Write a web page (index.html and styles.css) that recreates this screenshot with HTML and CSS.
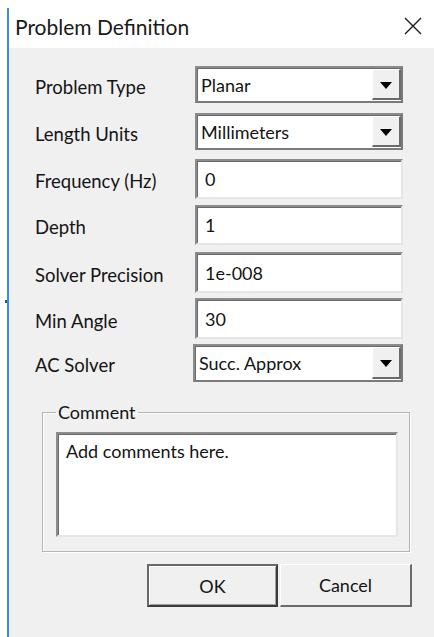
FILE: index.html
```html
<!DOCTYPE html>
<html>
<head>
<meta charset="utf-8">
<title>Problem Definition</title>
<link rel="stylesheet" href="styles.css">
</head>
<body>
<div class="window">
  <div class="titlebar">
    <span class="title">Problem Definition</span>
    <svg class="close" width="18" height="18" viewBox="0 0 18 18">
      <path d="M1 1 L17 17 M17 1 L1 17" stroke="#1e1e1e" stroke-width="1.4" fill="none"/>
    </svg>
  </div>
  <div class="client">
    <span class="edge-mark"></span>
    <div class="form">
      <div class="row h37">
        <label class="lbl">Problem Type</label>
        <div class="combo"><span class="val">Planar</span><span class="drop"><i class="arrow"></i></span></div>
      </div>
      <div class="row h37 gap10">
        <label class="lbl">Length Units</label>
        <div class="combo"><span class="val">Millimeters</span><span class="drop"><i class="arrow"></i></span></div>
      </div>
      <div class="row h40 gap9">
        <label class="lbl">Frequency (Hz)</label>
        <div class="edit"><span class="val">0</span></div>
      </div>
      <div class="row h40 gap6">
        <label class="lbl">Depth</label>
        <div class="edit"><span class="val">1</span></div>
      </div>
      <div class="row h41 gap7">
        <label class="lbl">Solver Precision</label>
        <div class="edit"><span class="val">1e-008</span></div>
      </div>
      <div class="row h41 gap5">
        <label class="lbl">Min Angle</label>
        <div class="edit"><span class="val">30</span></div>
      </div>
      <div class="row h38 gap5">
        <label class="lbl">AC Solver</label>
        <div class="combo wide"><span class="val">Succ. Approx</span><span class="drop"><i class="arrow"></i></span></div>
      </div>
    </div>

    <fieldset class="group">
      <legend class="group-title">Comment</legend>
      <div class="memo">Add comments here.</div>
    </fieldset>

    <div class="buttons">
      <button class="btn default">OK</button>
      <button class="btn">Cancel</button>
    </div>
  </div>
</div>
</body>
</html>
```

FILE: styles.css
```css
html, body {
  margin: 0;
  padding: 0;
  background: #ffffff;
}

body {
  font-family: Lato, "Noto Sans", sans-serif;
  color: #141414;
  width: 434px;
  height: 637px;
  overflow: hidden;
}

.window {
  margin: 8px 0 0 7px;
  border-left: 2px solid #3a8edb;
  height: 629px;
  display: flex;
  flex-direction: column;
}

.titlebar {
  height: 40px;
  background: #ffffff;
  display: flex;
  align-items: center;
  justify-content: space-between;
  padding: 0 12px 0 6px;
}

.title {
  font-size: 21px;
  color: #1a1a1a;
  position: relative;
  top: -2px;
}

.close {
  display: block;
  position: relative;
  top: -2px;
}

.client {
  flex: 1;
  background: #f0f0f0;
  position: relative;
  padding: 18px 0 0 0;
}

.edge-mark {
  position: absolute;
  left: -4px;
  top: 252px;
  width: 2px;
  height: 3px;
  background: #1e4fa8;
}

/* label / control rows */
.form {
  display: flex;
  flex-direction: column;
  margin-left: 26px;
}

.row {
  display: grid;
  grid-template-columns: 160px 208px;
}

.h37 { height: 37px; }
.h38 { height: 38px; }
.h40 { height: 40px; }
.h41 { height: 41px; }

.gap5 { margin-top: 5px; }
.gap6 { margin-top: 6px; }
.gap7 { margin-top: 7px; }
.gap9 { margin-top: 9px; }
.gap10 { margin-top: 10px; }

.lbl {
  font-size: 18.5px;
  display: flex;
  align-items: center;
  padding-top: 4px;
}

/* sunken 3D fields */
.edit, .combo {
  box-sizing: border-box;
  background: #ffffff;
  border-style: solid;
  border-width: 2px;
  border-color: #8c8c8c #e6e6e6 #e6e6e6 #8c8c8c;
  box-shadow: inset 1px 1px 0 #6a6a6a;
  display: flex;
  align-items: center;
  font-size: 18px;
}

.edit .val {
  padding-left: 8px;
}

.combo {
  border-color: #8c8c8c #7a7a7a #7a7a7a #8c8c8c;
}

.combo .val {
  flex: 1;
  padding-left: 4px;
}

.combo.wide {
  margin-left: -2px;
  width: 210px;
}

.drop {
  align-self: stretch;
  width: 29px;
  box-sizing: border-box;
  margin: 1px 0;
  background: #f0f0f0;
  border-style: solid;
  border-width: 1px 2px 2px 1px;
  border-color: #ffffff #6a6a6a #6a6a6a #ffffff;
  display: flex;
  align-items: center;
  justify-content: center;
}

.arrow {
  width: 0;
  height: 0;
  border-left: 6px solid transparent;
  border-right: 6px solid transparent;
  border-top: 7px solid #000000;
  margin-top: 2px;
}

/* etched group box */
.group {
  margin: 20px 0 0 33px;
  width: 368px;
  height: 150px;
  box-sizing: border-box;
  padding: 8px 11px 0 13px;
  border: 1px solid #b4b4b4;
  box-shadow: inset 1px 1px 0 #ffffff, 1px 1px 0 #ffffff;
}

.group-title {
  font-size: 18px;
  padding: 0 2px;
  line-height: 20px;
}

.memo {
  box-sizing: border-box;
  height: 105px;
  margin-top: 2px;
  background: #ffffff;
  border-style: solid;
  border-width: 2px;
  border-color: #8c8c8c #e6e6e6 #e6e6e6 #8c8c8c;
  box-shadow: inset 1px 1px 0 #6a6a6a;
  font-size: 18px;
  padding: 6px 8px;
}

.buttons {
  display: flex;
  gap: 2px;
  margin: 12px 0 0 138px;
}

.btn {
  font-family: Lato, "Noto Sans", sans-serif;
  font-size: 18px;
  color: #141414;
  width: 132px;
  height: 43px;
  background: #f0f0f0;
  border-style: solid;
  border-width: 1px 2px 2px 1px;
  border-color: #ffffff #6a6a6a #6a6a6a #ffffff;
  padding: 0;
}

.btn.default {
  width: 131px;
  border-width: 2px;
  border-color: #6a6a6a #3c3c3c #3c3c3c #6a6a6a;
  box-shadow: inset 1px 1px 0 #ffffff, inset -1px -1px 0 #a0a0a0;
}
```
